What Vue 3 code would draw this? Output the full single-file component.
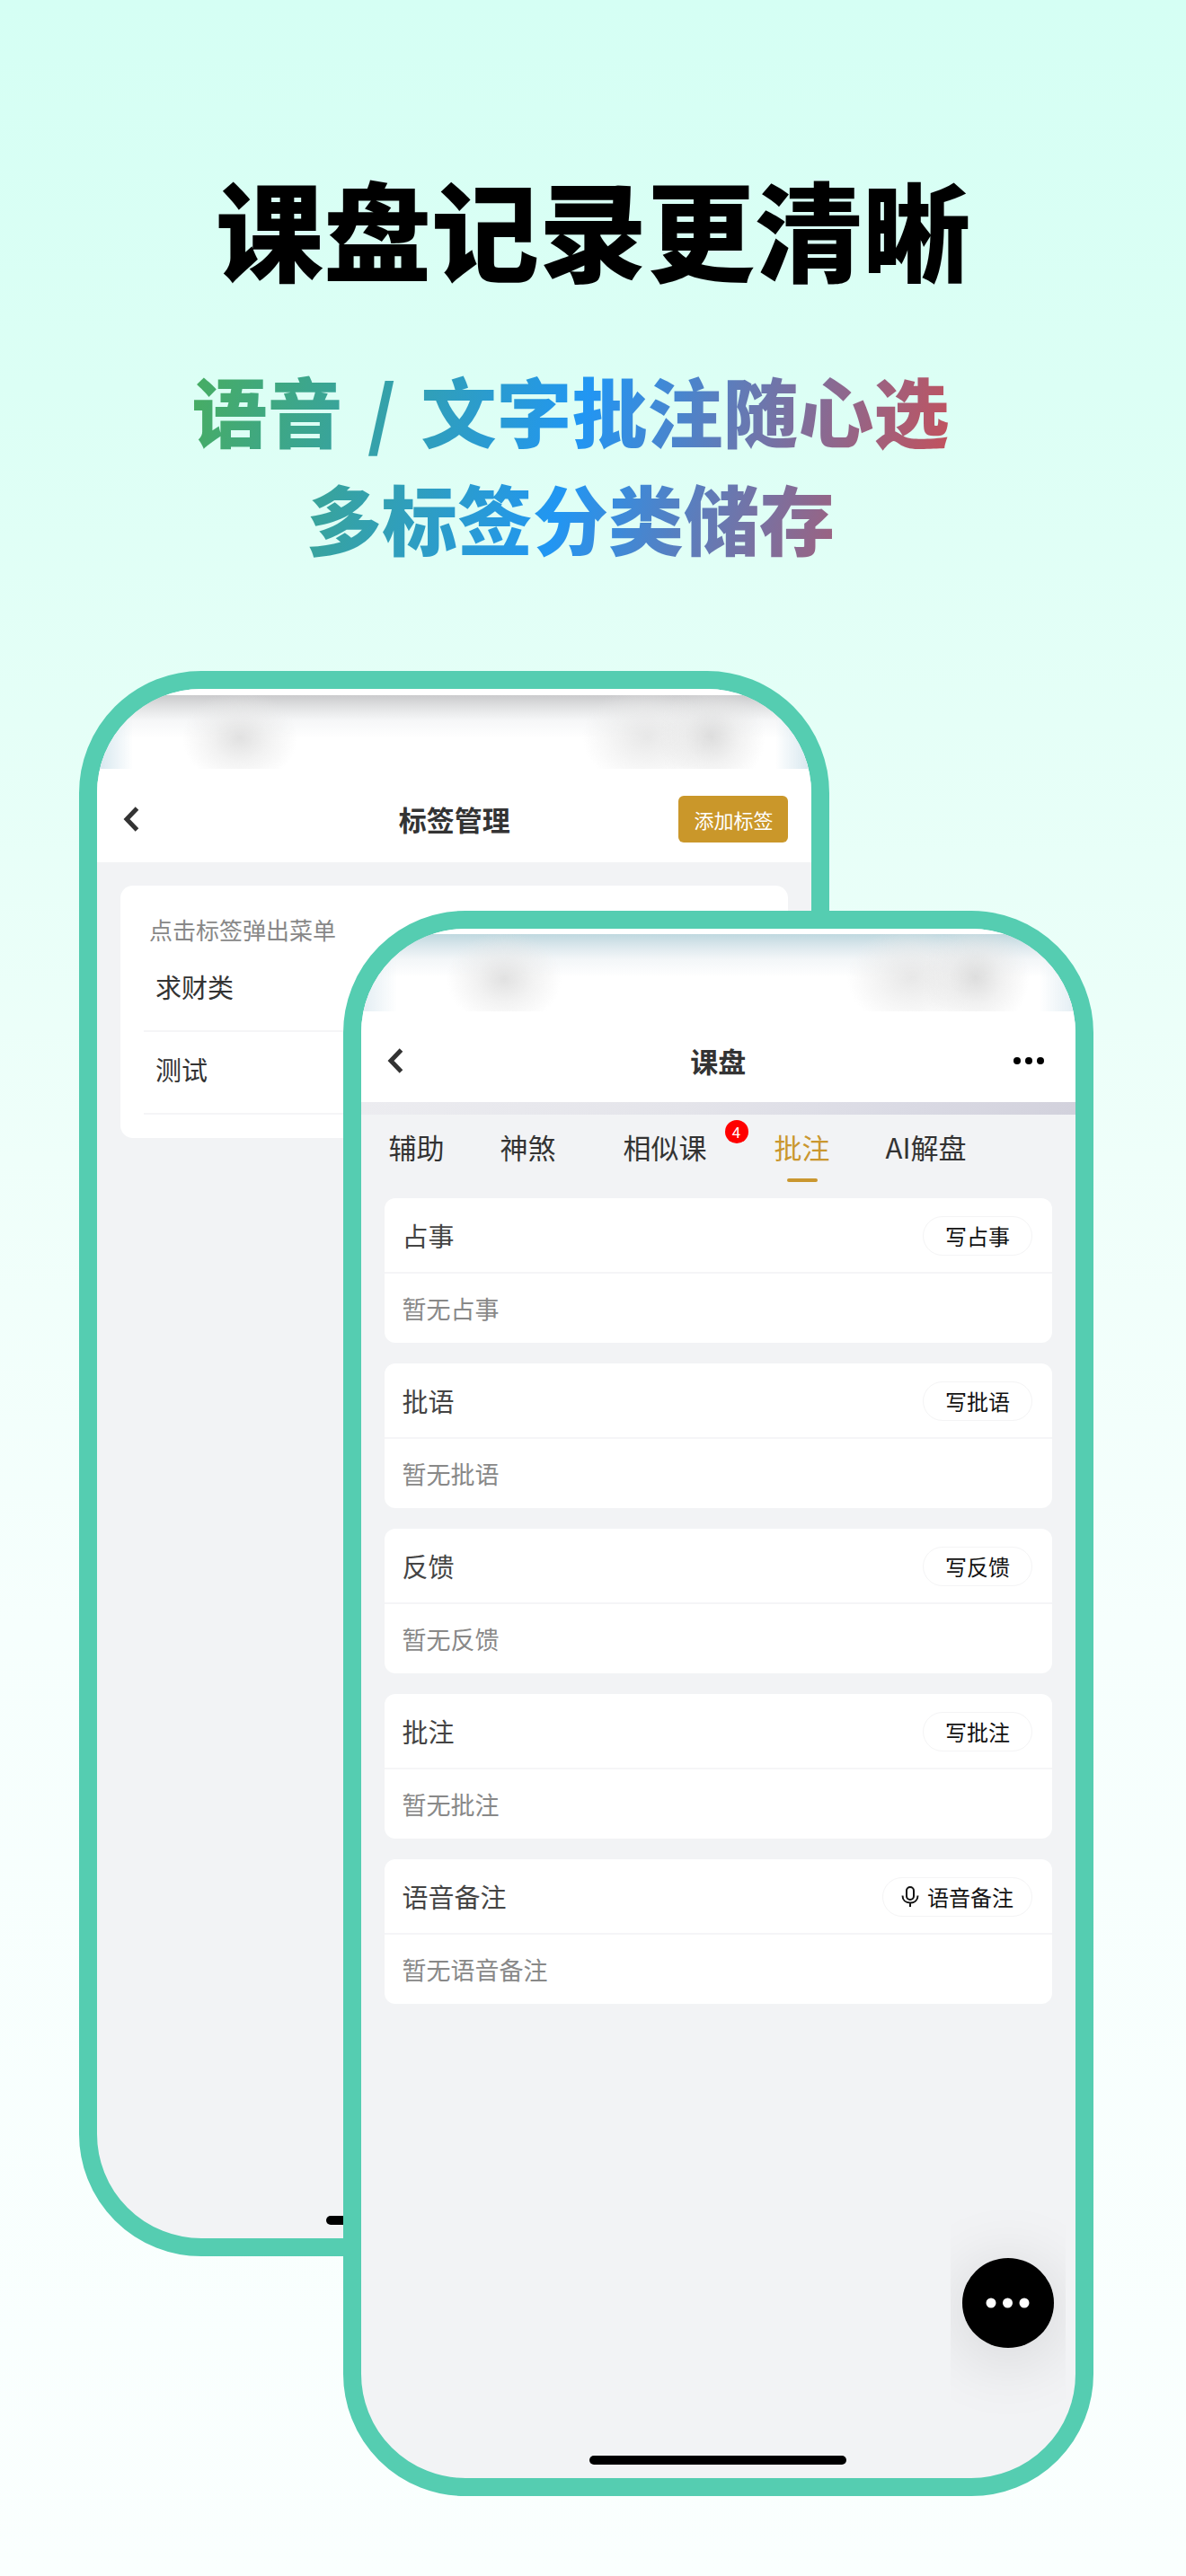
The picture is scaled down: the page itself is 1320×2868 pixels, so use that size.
<script setup>
const tags = ['求财类', '测试']

const tabs = [
  { name: '辅助' },
  { name: '神煞' },
  { name: '相似课', badge: 4 },
  { name: '批注', active: true },
  { name: 'AI解盘' }
]

const notes = [
  { title: '占事', action: '写占事', empty: '暂无占事' },
  { title: '批语', action: '写批语', empty: '暂无批语' },
  { title: '反馈', action: '写反馈', empty: '暂无反馈' },
  { title: '批注', action: '写批注', empty: '暂无批注' },
  { title: '语音备注', action: '语音备注', empty: '暂无语音备注', voice: true }
]
</script>

<template>
  <main class="page">
    <header class="hero">
      <h1>课盘记录更清晰</h1>
      <p class="tagline">语音<span class="slash"> / </span>文字批注随心选<br>多标签分类储存</p>
    </header>

    <div class="stage">
      <section class="phone phone-back">
        <div class="status status-grey"></div>
        <div class="navbar navbar-back">
          <button class="icon-button" type="button" aria-label="返回">
            <svg width="24" height="28" viewBox="0 0 24 28" fill="none" stroke="#333" stroke-width="5">
              <path d="M18.500 2 7 14l11.500 12" />
            </svg>
          </button>
          <h2>标签管理</h2>
          <button class="add" type="button">添加标签</button>
        </div>
        <div class="screen">
          <div class="tag-card">
            <p class="hint">点击标签弹出菜单</p>
            <ul>
              <li v-for="tag in tags" :key="tag">{{ tag }}</li>
            </ul>
          </div>
        </div>
        <div class="home-bar"></div>
      </section>

      <section class="phone phone-front">
        <div class="status status-blue"></div>
        <div class="navbar navbar-front">
          <button class="icon-button" type="button" aria-label="返回">
            <svg width="24" height="28" viewBox="0 0 24 28" fill="none" stroke="#333" stroke-width="5">
              <path d="M18.500 2 7 14l11.500 12" />
            </svg>
          </button>
          <h2>课盘</h2>
          <button class="icon-button more" type="button" aria-label="更多">
            <svg width="44" height="10" viewBox="0 0 44 10" fill="#000">
              <circle cx="5" cy="5" r="4" />
              <circle cx="18" cy="5" r="4" />
              <circle cx="31" cy="5" r="4" />
            </svg>
          </button>
        </div>
        <div class="strip"></div>
        <nav class="tabs">
          <a
            v-for="tab in tabs"
            :key="tab.name"
            href="#"
            :class="{ active: tab.active, wide: tab.badge }"
          >{{ tab.name }}<span v-if="tab.badge" class="badge">{{ tab.badge }}</span></a>
        </nav>
        <div class="notes">
          <article v-for="note in notes" :key="note.title" class="note">
            <div class="note-head">
              <h3>{{ note.title }}</h3>
              <button type="button" class="pill" :class="{ voice: note.voice }">
                <svg v-if="note.voice" width="20" height="24" viewBox="0 0 20 24" fill="none" stroke="#111" stroke-width="2">
                  <rect x="6" y="1" width="8" height="14" rx="4" />
                  <path d="M1.500 10.500c0 5 3.500 8 8.500 8s8.500-3 8.500-8M10 18.500V23" />
                </svg>
                {{ note.action }}
              </button>
            </div>
            <p>{{ note.empty }}</p>
          </article>
        </div>
        <div class="home-bar"></div>
        <div class="fab-halo">
          <button class="fab" type="button" aria-label="更多操作">
            <svg width="50" height="12" viewBox="0 0 50 12" fill="#fff">
              <circle cx="6" cy="6" r="5.500" />
              <circle cx="24.500" cy="6" r="5.500" />
              <circle cx="43" cy="6" r="5.500" />
            </svg>
          </button>
        </div>
      </section>
    </div>
  </main>
</template>

<style>
body {
  margin: 0;
}
</style>

<style scoped>
.page {
  box-sizing: border-box;
  padding-bottom: 89px;
  overflow: hidden;
  font-family: "Noto Sans CJK SC", "Noto Sans", sans-serif;
  color: #333;
  background: linear-gradient(#d5fff4 0%, #dcfff5 15%, #e5fff7 28%, #effffa 45%, #f6fffd 63%, #fafffe 100%);
}

h1,
h2,
h3,
p,
ul {
  margin: 0;
  padding: 0;
}

button {
  margin: 0;
  padding: 0;
  border: 0;
  background: none;
  font-family: inherit;
  color: inherit;
}

svg {
  display: block;
}

.hero {
  display: flex;
  flex-direction: column;
  align-items: center;
  padding-top: 173px;
}

h1 {
  font-size: 120px;
  font-weight: 900;
  line-height: 160px;
  color: #000;
}

.tagline {
  margin: 63px 50px 0 0;
  font-size: 84px;
  font-weight: 900;
  line-height: 120px;
  text-align: center;
  color: transparent;
  background: linear-gradient(105deg, #48ad60 0%, #2196f3 50%, #d04c50 100%);
  -webkit-background-clip: text;
  background-clip: text;
}

.slash {
  padding: 0 8px;
}

.stage {
  display: grid;
  padding: 111px 103px 0 88px;
}

.phone {
  grid-area: 1 / 1;
  position: relative;
  display: flex;
  flex-direction: column;
  box-sizing: border-box;
  width: 74%;
  min-height: 1765px;
  border: 20px solid #55cdb1;
  border-radius: 136px;
  overflow: hidden;
  background: #f2f3f5;
}

.phone-back {
  align-self: start;
}

.phone-front {
  justify-self: end;
  margin-top: 267px;
}

.status {
  height: 82px;
  border-top: 7px solid #fff;
}

.status-grey {
  background:
    radial-gradient(ellipse 64px 52px at 20% 58%, #dededee6, #e6e6e680 50%, #eeeeee00),
    radial-gradient(ellipse 60px 60px at 86% 56%, #d8d8d8dd, #e4e4e480 50%, #eeeeee00),
    radial-gradient(ellipse 72px 56px at 77% 56%, #e2e2e2cc, #e8e8e880 50%, #eeeeee00),
    linear-gradient(90deg, #d5e6ee 0, #d5e6ee00 40px),
    linear-gradient(270deg, #d5e6ee 0, #d5e6ee00 40px),
    linear-gradient(#cacacc 0, #e2e3e4 14px, #f6f7f8 28px, #fff 48px);
}

.status-blue {
  height: 86px;
  border-top-width: 6px;
  background:
    radial-gradient(ellipse 64px 52px at 20% 58%, #dededee6, #e6e6e680 50%, #eeeeee00),
    radial-gradient(ellipse 60px 60px at 86% 56%, #d8d8d8dd, #e4e4e480 50%, #eeeeee00),
    radial-gradient(ellipse 72px 56px at 77% 56%, #e2e2e2cc, #e8e8e880 50%, #eeeeee00),
    linear-gradient(90deg, #e2edf3 0, #e2edf300 40px),
    linear-gradient(270deg, #e2edf3 0, #e2edf300 40px),
    linear-gradient(#bfd8df 0, #dce8ed 14px, #f3f6f8 28px, #fff 48px);
}

.navbar {
  display: grid;
  grid-template-columns: 1fr auto 1fr;
  align-items: center;
  box-sizing: border-box;
  padding: 8px 26px 0;
  background: #fff;
}

.navbar-back {
  height: 104px;
}

.navbar-front {
  height: 101px;
}

h2 {
  font-size: 31px;
  font-weight: 700;
  line-height: 40px;
}

.icon-button {
  justify-self: start;
}

.more {
  justify-self: end;
}

.add {
  justify-self: end;
  width: 122px;
  height: 52px;
  border-radius: 6px;
  background: #ca972a;
  color: #fff;
  font-size: 22px;
  line-height: 50px;
}

.screen {
  padding: 26px;
}

.tag-card {
  padding: 27px 26px 26px;
  border-radius: 14px;
  background: #fff;
}

.hint {
  padding-left: 6px;
  font-size: 26px;
  line-height: 44px;
  color: #888;
}

ul {
  list-style: none;
}

li {
  height: 90px;
  padding-left: 13px;
  border-bottom: 2px solid #f5f5f7;
  font-size: 29px;
  line-height: 83px;
}

.home-bar {
  width: 36%;
  height: 10px;
  margin: auto auto 15px;
  border-radius: 5px;
  background: #000;
}

.strip {
  height: 14px;
  background: linear-gradient(100deg, #ececf0, #e4e4ea 45%, #dadae4 75%, #d2d1dc);
}

.tabs {
  display: flex;
}

.tabs a {
  position: relative;
  height: 75px;
  padding: 0 31px;
  font-size: 31px;
  line-height: 72px;
  white-space: nowrap;
  text-decoration: none;
  color: #333;
}

.tabs .wide {
  padding: 0 44px;
}

.tabs .active {
  color: #ca972f;
}

.active::after {
  content: "";
  position: absolute;
  bottom: 0;
  left: calc(50% - 17px);
  width: 34px;
  height: 4px;
  border-radius: 2px;
  background: #ca972f;
}

.badge {
  position: absolute;
  top: 6px;
  right: -2px;
  width: 26px;
  height: 26px;
  border-radius: 13px;
  background: #f00;
  color: #fff;
  font-size: 17px;
  line-height: 26px;
  text-align: center;
}

.notes {
  display: flex;
  flex-direction: column;
  gap: 23px;
  padding: 18px 26px;
}

.note {
  border-radius: 12px;
  background: #fff;
}

.note-head {
  display: flex;
  align-items: center;
  justify-content: space-between;
  height: 82px;
  padding: 0 22px 0 20px;
  border-bottom: 2px solid #f5f5f7;
}

h3 {
  font-size: 29px;
  font-weight: 400;
  line-height: 40px;
  color: #444;
}

.pill {
  display: flex;
  align-items: center;
  justify-content: center;
  gap: 9px;
  box-sizing: border-box;
  width: 122px;
  height: 44px;
  margin-top: 2px;
  border: 1px solid #f4f4f5;
  border-radius: 22px;
  font-size: 24px;
  line-height: 42px;
  white-space: nowrap;
  color: #111;
}

.pill.voice {
  width: 167px;
}

.note p {
  padding: 0 20px;
  font-size: 27px;
  line-height: 77px;
  color: #888;
}

.fab-halo {
  position: absolute;
  right: 11px;
  bottom: 69px;
  display: flex;
  align-items: center;
  justify-content: center;
  width: 128px;
  height: 252px;
  overflow: hidden;
}

.fab {
  display: flex;
  align-items: center;
  justify-content: center;
  width: 102px;
  height: 100px;
  border-radius: 50%;
  background: #000;
  box-shadow: 0 10px 70px 10px #0000001a;
}
</style>
